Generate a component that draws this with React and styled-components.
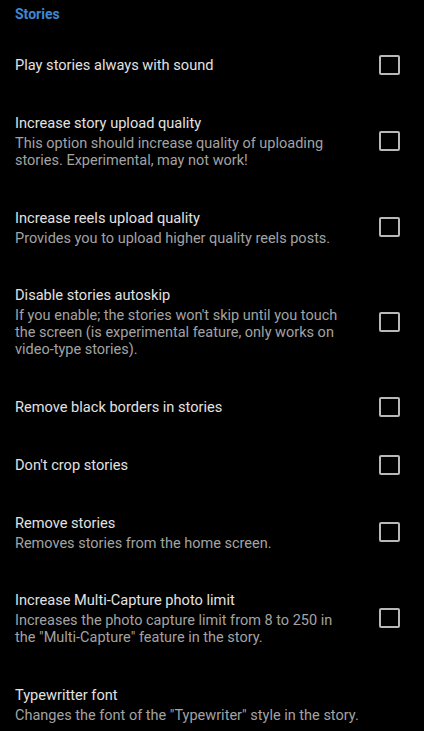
import React from 'react';
import styled, {createGlobalStyle} from "styled-components";

const GlobalStyle = createGlobalStyle`
  html, body {
    margin: 0;
    padding: 0;
    background: #000;
  }
  body {
    font-family: Roboto, "Noto Sans", sans-serif;
    -webkit-font-smoothing: antialiased;
  }
`;

const Screen = styled.div`
  width: 424px;
  min-height: 731px;
  background: #000;
  overflow: hidden;
`;

const Category = styled.div`
  padding: 5px 15px 0 15px;
  height: 36px;
  box-sizing: border-box;
  color: #3f87d2;
  font-size: 14px;
  font-weight: 700;
  line-height: 18px;
`;

const Row = styled.div`
  display: flex;
  align-items: center;
  padding: 19px 24px 19px 15px;
`;

const Content = styled.div`
  flex: 1;
  padding-right: 29px;
  min-width: 0;
`;

const Title = styled.div`
  color: #e2e2e2;
  font-size: 14.6px;
  line-height: 20px;
`;

const Summary = styled.div`
  margin-top: 2px;
  color: #a3a3a3;
  font-size: 14.5px;
  line-height: 17.3px;
`;

const Box = styled.div`
  width: 21px;
  height: 20px;
  box-sizing: border-box;
  border: 2px solid #b8b8b8;
  border-radius: 2px;
  flex-shrink: 0;
`;

const prefs = [
    {title: "Play stories always with sound"},
    {title: "Increase story upload quality",
        summary: "This option should increase quality of uploading stories. Experimental, may not work!"},
    {title: "Increase reels upload quality",
        summary: "Provides you to upload higher quality reels posts."},
    {title: "Disable stories autoskip",
        summary: "If you enable; the stories won't skip until you touch the screen (is experimental feature, only works on video\u2011type stories)."},
    {title: "Remove black borders in stories"},
    {title: "Don't crop stories"},
    {title: "Remove stories",
        summary: "Removes stories from the home screen."},
    {title: "Increase Multi-Capture photo limit",
        summary: "Increases the photo capture limit from 8 to 250 in the \"Multi-Capture\" feature in the story."},
    {title: "Typewritter font",
        summary: "Changes the font of the \"Typewriter\" style in the story.", noBox: true},
];

function PrefRow({title, summary, noBox}) {
    return (
        <Row>
            <Content>
                <Title>{title}</Title>
                {summary && <Summary>{summary}</Summary>}
            </Content>
            {!noBox && <Box/>}
        </Row>
    );
}

export default function App() {
    return (
        <>
            <GlobalStyle/>
            <Screen>
                <Category>Stories</Category>
                {prefs.map((p) => (
                    <PrefRow key={p.title} {...p}/>
                ))}
            </Screen>
        </>
    );
}
